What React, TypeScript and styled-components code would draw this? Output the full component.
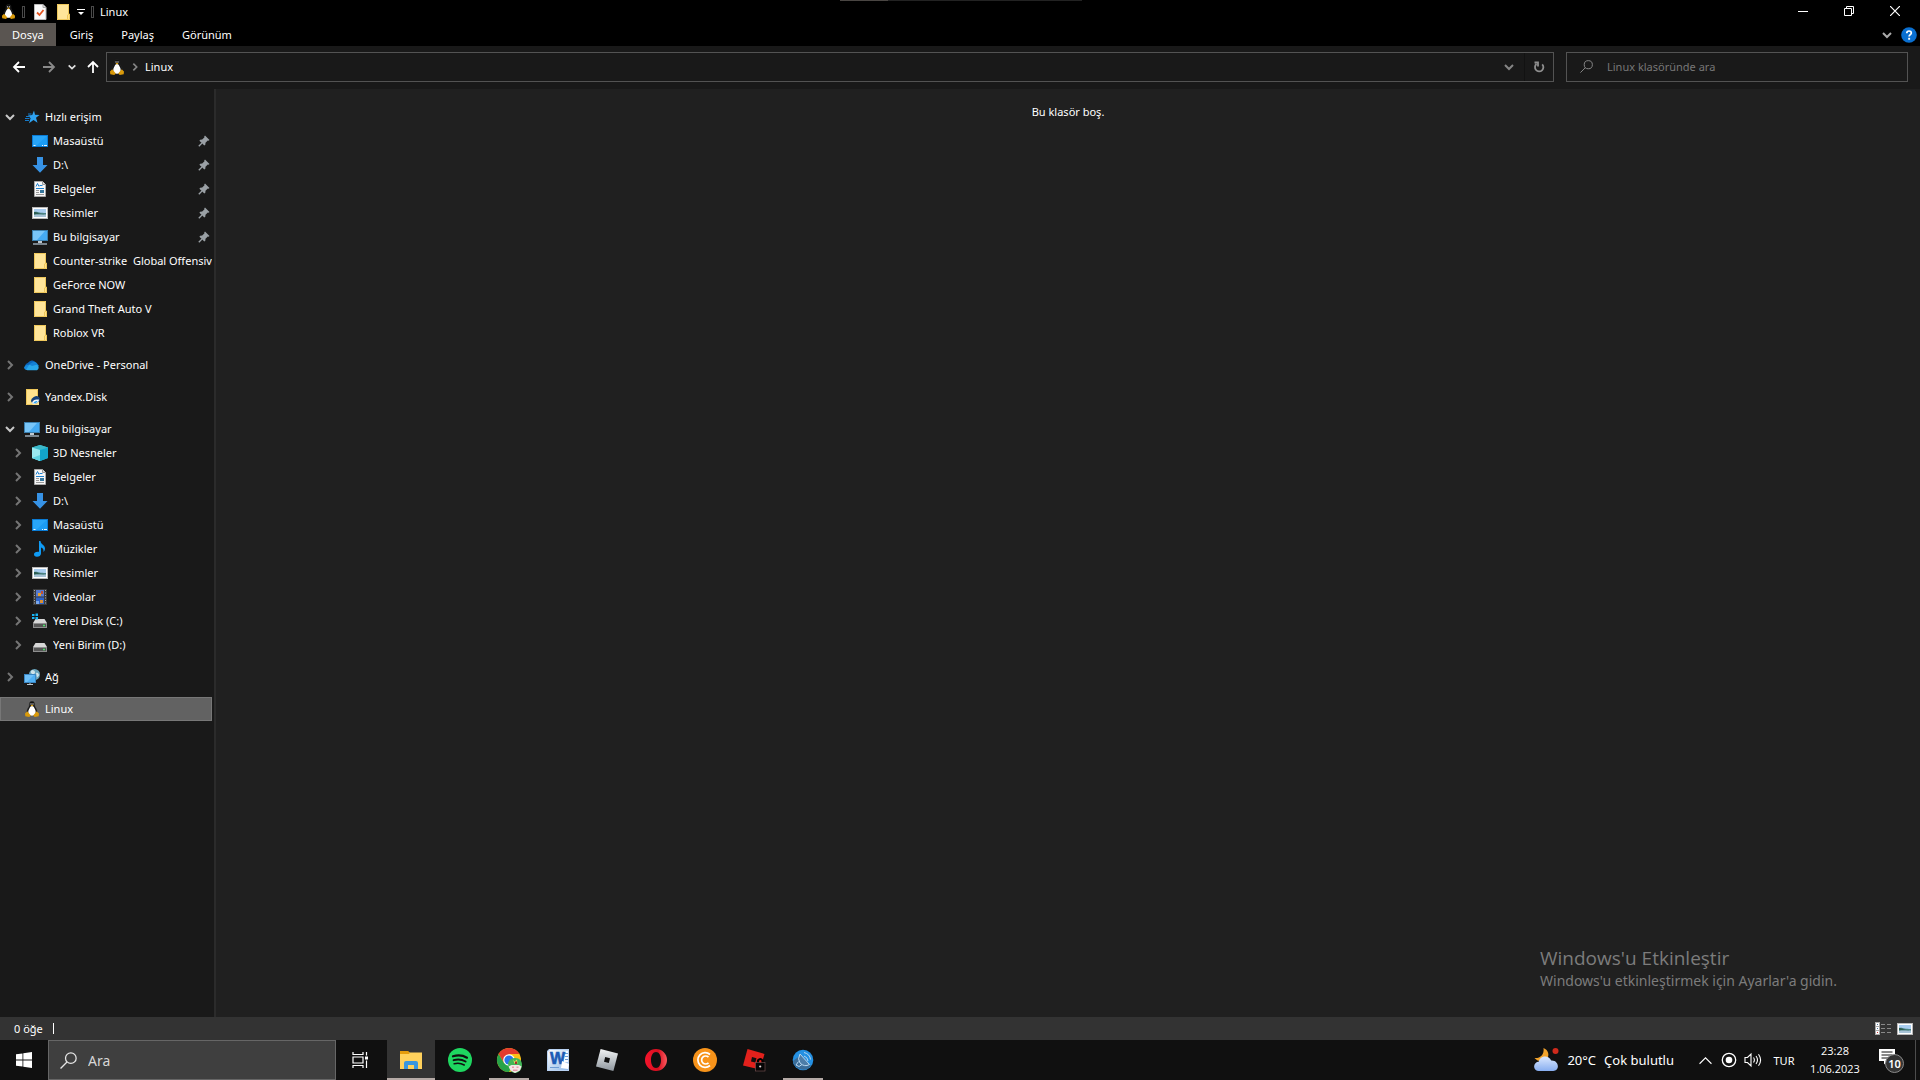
import React, { ReactNode } from "react";
import styled, { createGlobalStyle } from "styled-components";

const GlobalStyle = createGlobalStyle`
  * { box-sizing: border-box; }
  html, body { margin: 0; padding: 0; background: #191919; }
  body { font-family: "Noto Sans", "Open Sans", sans-serif; font-size: 11px; color: #fff; overflow: hidden; }
  button, input { font: inherit; color: inherit; border: 0; padding: 0; margin: 0; background: none; }
  button { cursor: pointer; }
  ul { list-style: none; margin: 0; padding: 0; }
  a { color: inherit; text-decoration: none; }
  svg { display: block; flex: none; }
`;

/* ---------- layout ---------- */

const Desktop = styled.div`
  display: flex;
  flex-direction: column;
  min-height: 100vh;
`;

const TitleBar = styled.header`
  display: flex;
  align-items: center;
  justify-content: space-between;
  height: 23px;
  background: #000;
`;

const QuickAccess = styled.div`
  display: flex;
  align-items: center;
  height: 100%;
  gap: 6px;
  padding-left: 1px;
`;

const IconButton = styled.button<{ $w: number }>`
  display: flex;
  align-items: center;
  justify-content: center;
  width: ${(p) => p.$w}px;
  height: 100%;
`;

const TitleText = styled.h1`
  margin: 0;
  font-size: 11px;
  font-weight: 400;
  line-height: 16px;
`;

const Divider = styled.span`
  width: 3px;
  height: 12px;
  border: 1px solid #4a4a4a;
`;

const WindowButtons = styled.div`
  display: flex;
  height: 100%;
  padding-right: 2px;
  padding-bottom: 2px;
`;

const TopStrip = styled.span`
  position: absolute;
  top: 0;
  left: 50%;
  width: 242px;
  height: 1px;
  margin-left: -120px;
  background: linear-gradient(to right, #4a4643 48px, #222 48px);
`;

const Ribbon = styled.nav`
  display: flex;
  justify-content: space-between;
  height: 23px;
  background: #000;
`;

const Tabs = styled.div`
  display: flex;
`;

const Tab = styled.button<{ $active?: boolean }>`
  padding: 0 ${(p) => (p.$active ? 12 : 14)}px;
  line-height: 16px;
  background: ${(p) => (p.$active ? "#5a5551" : "transparent")};
`;

const AddressRow = styled.div`
  display: flex;
  align-items: center;
  height: 43px;
  padding: 0 12px 1px 4px;
`;

const AddressBox = styled.div`
  display: flex;
  align-items: center;
  flex: 1;
  height: 30px;
  padding-left: 2px;
  border: 1px solid #535353;
`;

const Crumb = styled.a`
  flex: 1;
  line-height: 16px;
`;

const RefreshCell = styled.span`
  display: flex;
  height: 100%;
  border-left: 1px solid #121212;
`;

const SearchBox = styled.label`
  display: flex;
  align-items: center;
  width: 342px;
  height: 30px;
  margin-left: 12px;
  padding: 0 13px 1px;
  gap: 14px;
  border: 1px solid #535353;
`;

const SearchInput = styled.input`
  flex: 1;
  min-width: 0;
  outline: none;
  &::placeholder { color: #777; opacity: 1; }
`;

const Body = styled.div`
  display: flex;
  flex: 1;
`;

const NavPane = styled.nav`
  display: flex;
  flex-direction: column;
  gap: 8px;
  width: 216px;
  padding: 16px 2px 0 0;
  border-right: 2px solid #2b2b2b;
  overflow: hidden;
`;

const Row = styled.li<{ $child?: boolean; $selected?: boolean }>`
  display: flex;
  align-items: center;
  height: 24px;
  padding-left: ${(p) => (p.$child ? 10 : 2)}px;
  background: ${(p) => (p.$selected ? "#626262" : "transparent")};
  box-shadow: ${(p) => (p.$selected ? "inset 0 0 0 1px #777" : "none")};
`;

const Toggle = styled.button`
  display: flex;
  align-items: center;
  justify-content: center;
  flex: none;
  width: 16px;
  height: 24px;
  margin-right: 6px;
`;

const RowLink = styled.a`
  display: flex;
  align-items: center;
  flex: 1;
  min-width: 0;
  gap: 5px;
`;

const RowText = styled.span`
  flex: 1;
  overflow: hidden;
  white-space: pre;
  line-height: 20px;
`;

const PinSlot = styled.span`
  padding-right: 2px;
`;

const Content = styled.main`
  flex: 1;
  padding-top: 14px;
  background: #202020;
  text-align: center;
  line-height: 18px;
`;

const EmptyText = styled.p`
  margin: 0;
`;

const Watermark = styled.aside`
  position: absolute;
  right: 82px;
  bottom: 89px;
  width: 298px;
  color: #7c7c7c;
  white-space: nowrap;
`;

const WatermarkTitle = styled.p`
  margin: 0;
  font-family: "Open Sans", "Noto Sans", sans-serif;
  font-size: 19px;
  line-height: 26px;
`;

const WatermarkText = styled.p`
  margin: 0;
  font-size: 14px;
  line-height: 20px;
`;

const StatusBar = styled.footer`
  display: flex;
  align-items: center;
  height: 23px;
  padding: 0 4px 0 14px;
  gap: 10px;
  background: #333;
`;

const Caret = styled.span`
  flex: 1;
  height: 11px;
  border-left: 1px solid #fff;
`;

const Views = styled.div`
  display: flex;
  height: 100%;
`;

const TaskBar = styled.footer`
  display: flex;
  justify-content: space-between;
  height: 40px;
  background: #101010;
`;

const TaskGroup = styled.div`
  display: flex;
  align-items: center;
`;

const TaskSearch = styled.label`
  display: flex;
  align-items: center;
  gap: 11px;
  width: 288px;
  height: 40px;
  padding-left: 11px;
  background: #3f3f3f;
  border: 1px solid #666;
  font-size: 14px;
`;

const TaskInput = styled.input`
  flex: 1;
  min-width: 0;
  outline: none;
  &::placeholder { color: #d6d6d6; opacity: 1; }
`;

const Apps = styled.div`
  display: flex;
  gap: 1px;
  padding-left: 3px;
`;

const TaskButton = styled.button<{ $active?: boolean; $running?: boolean }>`
  display: flex;
  align-items: center;
  justify-content: center;
  width: 48px;
  height: 40px;
  background-color: ${(p) => (p.$active ? "#333" : "transparent")};
  background-image: ${(p) => (p.$active || p.$running ? "linear-gradient(#b5aaa6, #b5aaa6)" : "none")};
  background-repeat: no-repeat;
  background-position: bottom;
  background-size: ${(p) => (p.$active ? 48 : 40)}px 2px;
`;

const Weather = styled.button`
  display: flex;
  align-items: center;
  gap: 8px;
  height: 40px;
  margin-right: 19px;
  font-size: 13px;
`;

const Lang = styled.button`
  width: 38px;
  height: 40px;
`;

const Clock = styled.button`
  width: 64px;
  height: 40px;
  font-family: "Open Sans", "Noto Sans", sans-serif;
  line-height: 18px;
`;

const ShowDesktop = styled.button`
  width: 5px;
  height: 40px;
  border-left: 1px solid #4c4c4c;
`;

/* ---------- icons ---------- */

type IconProps = { size?: number };

const Tux = ({ size = 16 }: IconProps) => (
  <svg width={size} height={size} viewBox="0 0 16 16">
    <path d="M8 0.300c-1.800 0-2.600 1.200-2.600 3 0 1.500-.3 2.200-1.200 3.600C3.300 8.300 2.800 9.800 2.900 12l2.200 2.500h5.800L13.100 12c.1-2.200-.4-3.700-1.300-5.100-.9-1.400-1.200-2.100-1.200-3.600 0-1.800-.8-3-2.600-3z" fill="#111" stroke="#333" strokeWidth=".4" />
    <path d="M8 5c-1.500 0-2 1-2.600 2.500-.8 1.400-1.300 2.700-1.100 4.700.2 1.700 1.900 2.500 3.700 2.500s3.500-.8 3.700-2.500c.2-2-.3-3.300-1.100-4.700C10 6 9.500 5 8 5z" fill="#fff" />
    <circle cx="7" cy="3" r=".7" fill="#ddd" /><circle cx="9" cy="3" r=".7" fill="#ddd" />
    <path d="M6.500 4.300L8 3.700l1.500.6L8 5.500z" fill="#e2a60f" />
    <path d="M3.300 10.300L1 12.500l.3 2.700 4 .7 1.500-1.500zM12.700 10.300l2.300 2.200-.3 2.700-4 .7-1.500-1.500z" fill="#d99a0b" />
  </svg>
);

const Folder = () => (
  <svg width="16" height="16" viewBox="0 0 16 16">
    <path d="M2 0h12v10.500h1V16H2z" fill="#ffe08a" />
    <path d="M2 0h12v10.500l-1.500 1V16H2z" fill="#ffe599" />
    <path d="M2.500.5h11v10M2.500.5v15h10v-4.500l2-1v5.500h-2" fill="none" stroke="#eec75a" strokeWidth="1" />
  </svg>
);

const CheckedDoc = () => (
  <svg width="14" height="16" viewBox="0 0 14 16">
    <path d="M1.500.5h8.500l3 3v12H1.500z" fill="#fafafa" stroke="#bbb" />
    <path d="M10 .5v3h3" fill="#ddd" stroke="#aaa" />
    <path d="M4 8.500l2.500 2.500 4-5" fill="none" stroke="#e35420" strokeWidth="1.800" />
  </svg>
);

const Star = () => (
  <svg width="16" height="16" viewBox="0 0 16 16">
    <path d="M10 1.500l1 4.300 4.500.2-3.500 2.700 1.500 5-4-2.700-4.500 3.300 1.600-5-2.600-2.800 4.200-.4z" fill="#2ea3f2" />
    <path d="M2 7.500h4M1 9.500h4.500M1 11.500h4M4 5h3.500" stroke="#1479c9" />
  </svg>
);

const DesktopIcon = () => (
  <svg width="16" height="16" viewBox="0 0 16 16">
    <rect x=".5" y="2.500" width="15" height="11" fill="#1b9cf4" stroke="#0a7bd4" />
    <path d="M1 3h14L4 13H1z" fill="#36aefb" opacity=".5" />
    <path d="M1.500 12.500h2M10 12.500h1M12 12.500h3" stroke="#e8f6ff" />
  </svg>
);

const Download = () => (
  <svg width="16" height="16" viewBox="0 0 16 16">
    <path d="M5 0h6v8h4.500L8 15.800.500 8H5z" fill="#3793e6" />
  </svg>
);

const Document = () => (
  <svg width="16" height="16" viewBox="0 0 16 16">
    <path d="M2.500.5h8l3 3v12h-11z" fill="#f7f7f7" stroke="#a9a9a9" />
    <path d="M10.500.5v3h3" fill="#ddd" stroke="#999" />
    <path d="M4 5.500l1.500-3L7 5.500M7.500 4.500h3M4 7.500h8" fill="none" stroke="#1d80cf" />
    <path d="M4 9.500h3M4 11.500h3M4 13.500h8" stroke="#999" />
    <rect x="8" y="9" width="4" height="3" fill="#35769c" />
  </svg>
);

const Picture = () => (
  <svg width="16" height="16" viewBox="0 0 16 16">
    <rect x=".5" y="2.500" width="15" height="11" fill="#fff" stroke="#b9b9b9" />
    <rect x="2" y="4" width="12" height="8" fill="#a9cdf0" />
    <path d="M2 7c3-1 5 1 12 1v4H2z" fill="#4c8383" />
    <path d="M2 10c4-1 8 0 12-.500V12H2z" fill="#a7c3d6" />
    <path d="M2 7c3 0 4 1.500 8 2H2z" fill="#2d5d50" />
  </svg>
);

const Computer = () => (
  <svg width="16" height="16" viewBox="0 0 16 16">
    <rect x=".5" y="1.500" width="15" height="10" fill="#45aaf2" stroke="#3b7fae" />
    <path d="M1 2h12L5 11H1z" fill="#8ed0fb" opacity=".7" />
    <path d="M6 13h4" stroke="#bfc9d1" strokeWidth="2" />
    <path d="M1 15h14" stroke="#9aa9b5" strokeWidth="1.500" />
  </svg>
);

const OneDrive = () => (
  <svg width="16" height="16" viewBox="0 0 16 16">
    <path d="M1 9a4 4 0 0 1 3-3.300A4.700 4.700 0 0 1 12 6L13 8 3 13z" fill="#0c64b8" />
    <path d="M8 5.500a4 4 0 0 1 5.500 1.500L15 9l-7 3-4-4z" fill="#1481d6" />
    <path d="M1 11.500C2 8 6 7 8 9l4.500-1.300a3 3 0 0 1 .5 5.600H3.500A2.600 2.600 0 0 1 1 11.500z" fill="#29a7ea" />
    <path d="M0 10.500a3.500 3.500 0 0 1 3-2.500h2L2 12.800A3 3 0 0 1 0 10.500z" fill="#1689dc" />
  </svg>
);

const YandexDisk = () => (
  <svg width="16" height="16" viewBox="0 0 16 16">
    <path d="M2 0h12v8h1v8H2z" fill="#ffe28e" />
    <path d="M2.500.5h11v8M2.500 0v15.500h6" fill="none" stroke="#eec75a" />
    <ellipse cx="11.500" cy="11" rx="4.500" ry="3.500" fill="#143f78" transform="rotate(-30 11.500 11)" />
    <path d="M8 14.500c0-3 3-4.500 7-4 0 3-3 5.500-7 4z" fill="#eef7ff" />
    <path d="M9.500 14c1-2 3-2 4-2-1 2-2 2.500-4 2z" fill="#2aa4ef" />
  </svg>
);

const Cube = () => (
  <svg width="16" height="16" viewBox="0 0 16 16">
    <path d="M8 0l8 2.500v10.500L8 16 0 13V2.500z" fill="#37c4d8" />
    <path d="M0 2.500L8 0l8 2.500L8 5z" fill="#3cb8c9" />
    <path d="M0 2.500L8 5v11L0 13z" fill="#9ae9f0" />
    <path d="M8 5l8-2.500V13l-8 3z" fill="#12a5cc" />
    <path d="M0 13l8-3v6z" fill="#5fd3e2" />
  </svg>
);

const Music = () => (
  <svg width="16" height="16" viewBox="0 0 16 16">
    <path d="M7 0h1.500c.3 3.500 4.500 4 4.500 7.500 0 1.500-.6 2.600-1.500 3.500.4-3-1-4-2.500-4.500V12.500c0 2-1.800 3.300-4 3.300S2 14.700 2 13.300c0-1.700 2-3 5-2.500z" fill="#0f9bf5" />
  </svg>
);

const Video = () => (
  <svg width="16" height="16" viewBox="0 0 16 16">
    <rect x="1" y="0" width="14" height="16" fill="#3a3a3a" />
    <path d="M2.500 1v14M13.500 1v14" stroke="#a8a8a8" strokeDasharray="1 1.500" />
    <rect x="4" y="1" width="8" height="6.500" fill="#5679cf" />
    <rect x="4" y="8.500" width="8" height="6.500" fill="#2f64c8" />
    <path d="M6 4h3v3H6z" fill="#e3a12f" /><path d="M9 2h2v3H9z" fill="#c14f35" />
    <path d="M8 11h3v3H8z" fill="#d98f34" /><path d="M4 12h3v3H4z" fill="#79a7ec" />
  </svg>
);

const Disk = ({ system }: { system?: boolean }) => (
  <svg width="16" height="16" viewBox="0 0 16 16">
    <path d="M3.500 6h9L15 10H1z" fill="#d7d7d7" />
    <rect x="1" y="10" width="14" height="5" fill="#8e8e8e" />
    <rect x="2" y="11" width="12" height="3" fill="#555" />
    <path d="M11 12.500h2" stroke="#4be36a" strokeWidth="1.500" />
    {system && <path d="M0 1h2.500v2H0zM3.500 .500H6V3H3.500zM0 4h2.500v2H0zM3.500 4H6v2.500H3.500z" fill="#19b5f5" />}
  </svg>
);

const Network = () => (
  <svg width="16" height="16" viewBox="0 0 16 16">
    <circle cx="10.500" cy="5.500" r="5.500" fill="#6aa5bd" />
    <path d="M8 1c2 0 3 1 3 2.500S9 6 8 5 6 3 8 1zM12 4c2-1 3 1 3 2.500l-2 2z" fill="#cfe4ea" />
    <rect x=".5" y="5.500" width="11" height="8" fill="#4fb0f4" stroke="#3b87c4" />
    <path d="M1 6h9l-7 7H1z" fill="#90d0fb" opacity=".5" />
    <path d="M6 14v1M3 15.500h6" stroke="#b8c4cd" />
  </svg>
);

const Pin = () => (
  <svg width="12" height="12" viewBox="0 0 12 12">
    <path d="M7 .5L11.500 5l-1 .8-.7-.3L7.500 7.800l-.2 2-1 .8L1.400 5.700l.8-1 2-.2 2.300-2.300-.3-.7z" fill="#9aa0a5" />
    <path d="M4 8L.8 11.200" stroke="#9aa0a5" strokeWidth="1.300" />
  </svg>
);

const Chevron = ({ dir, color = "#9b9b9b", size = 12, weight = 2 }: { dir: "down" | "right" | "up"; color?: string; size?: number; weight?: number }) => (
  <svg width={size} height={size} viewBox="0 0 12 12" fill="none" stroke={color} strokeWidth={weight}>
    <path d={dir === "down" ? "M2 4l4 4 4-4" : dir === "right" ? "M4 2l4 4-4 4" : "M0.500 9L6 3.500 11.500 9"} />
  </svg>
);

const Arrow = ({ dir, color = "#fff" }: { dir: "left" | "right" | "up"; color?: string }) => (
  <svg width="14" height="14" viewBox="0 0 14 14" fill="none" stroke={color} strokeWidth="1.800">
    <path d={{ left: "M13 7H2M7 2L2 7l5 5", right: "M1 7h11M7 2l5 5-5 5", up: "M7 13V2M2 7l5-5 5 5" }[dir]} />
  </svg>
);

const Magnifier = ({ size = 13, color = "#888" }: { size?: number; color?: string }) => (
  <svg width={size} height={size} viewBox="0 0 16 16" fill="none" stroke={color} strokeWidth="1.200">
    <circle cx="10.200" cy="5.800" r="5" /><path d="M6.600 9.400L.5 15.500" />
  </svg>
);

const Refresh = () => (
  <svg width="12" height="12" viewBox="0 0 12 12" fill="none" stroke="#8f8f8f" strokeWidth="1.800">
    <path d="M9.200 3.300A4.200 4.200 0 1 1 3.500 3M1.500 1.500h3.500v4" />
  </svg>
);

const Help = () => (
  <svg width="16" height="16" viewBox="0 0 16 16">
    <circle cx="8" cy="8" r="7.800" fill="#0a6fd0" />
    <path d="M5.800 6.200c0-3 4.600-2.800 4.500-.2 0 1.600-2.200 1.700-2.200 3.500" fill="none" stroke="#fff" strokeWidth="1.700" />
    <rect x="7.200" y="10.800" width="1.900" height="1.900" fill="#fff" />
  </svg>
);

const WindowsLogo = () => (
  <svg width="16" height="16" viewBox="0 0 16 16" fill="#fff">
    <path d="M0 2.300l6.500-.9v6.200H0zM7.300 1.300L16 0v7.600H7.300zM0 8.400h6.500v6.200L0 13.700zM7.300 8.400H16V16l-8.700-1.300z" />
  </svg>
);

const TaskView = () => (
  <svg width="17" height="16" viewBox="0 0 17 16" fill="none" stroke="#fff" strokeWidth="1.200">
    <path d="M1 0v2.500h10V0M1 16v-2.500h10V16M1 5h10v6H1zM14.500 0v3.500M14.500 8.500V16" />
    <path d="M13 4.500h3v3h-3z" fill="#fff" stroke="none" />
  </svg>
);

const Explorer = () => (
  <svg width="22" height="19" viewBox="0 0 22 19">
    <path d="M0 1h8l2 .5h12V18H0z" fill="#ffd15c" />
    <path d="M0 0h8.500l1 3H0z" fill="#e59c0c" />
    <path d="M4 18v-6q0-2 2-2h10q2 0 2 2v6h-4v-4H8v4z" fill="#3a96dd" />
  </svg>
);

const Spotify = () => (
  <svg width="24" height="24" viewBox="0 0 24 24">
    <circle cx="12" cy="12" r="12" fill="#1ed760" />
    <g fill="none" stroke="#101010" strokeLinecap="round">
      <path d="M5 8.300c4.500-1.400 10-1 14 1.400" strokeWidth="2.200" />
      <path d="M5.600 12.200c4-1.200 8.500-.7 12 1.300" strokeWidth="1.900" />
      <path d="M6.200 15.800c3.400-.9 7-.5 10 1.200" strokeWidth="1.600" />
    </g>
  </svg>
);

const Chrome = () => (
  <svg width="26" height="26" viewBox="-1 -1 26 26">
    <circle cx="12" cy="12" r="12" fill="#fbc116" />
    <path d="M1.600 6A12 12 0 0 1 22.400 6H12L7 15z" fill="#e33b2e" />
    <path d="M1.600 6A12 12 0 0 0 12 24l5-9-10 0z" fill="#27a349" />
    <circle cx="12" cy="12" r="5.800" fill="#fff" /><circle cx="12" cy="12" r="4.600" fill="#2a75e8" />
    <path d="M11 15.500c1-4 4-5.500 7.500-5.500 4 0 6.500 3 6.500 7s-3 8-7 8-6-4-7-9.500z" fill="#41b658" />
    <path d="M11.500 18.500l3-1.500h7.500l2.500 1.500-1.500 4-5 2.500-4.500-2.500z" fill="#f3e6e6" />
    <path d="M16 11.500l1.500 2 2.500-2 .5 4h-3z" fill="#e6de5a" />
    <path d="M18 13.500h2v2.500h-2z" fill="#a92c2c" />
    <path d="M15 18.500h2v1.500h-2zM19.500 18.500h2v1.500h-2zM16 21.500h4.500v1.500H16z" fill="#e79aa8" />
  </svg>
);

const Word = () => (
  <svg width="22" height="22" viewBox="0 0 22 22">
    <defs><linearGradient id="word" x1="0" y1="0" x2="1" y2="1"><stop offset="0" stopColor="#fff" /><stop offset="1" stopColor="#8fb7e6" /></linearGradient></defs>
    <path d="M2 0h20v22H0V2z" fill="#b9d2f2" /><path d="M3 1h18v20H1V3z" fill="url(#word)" />
    <path d="M17 2h4v11h-4z" fill="#f8fbff" />
    <path d="M18 4.500h3M18 7.500h3M18 10.500h3M3 18.500h9" stroke="#6d9bd3" />
    <text x="10.500" y="15" textAnchor="middle" fontFamily="Liberation Sans, sans-serif" fontSize="16" fontWeight="700" fill="#1c5bb5" stroke="#1c5bb5" strokeWidth=".6">W</text>
    <path d="M15 12l7 3-1 5-7-1z" fill="#fff" />
  </svg>
);

const Roblox = () => (
  <svg width="22" height="22" viewBox="0 0 22 22">
    <defs><linearGradient id="rbx" x1="0" y1="0" x2="0" y2="1"><stop offset="0" stopColor="#f2f4f5" /><stop offset="1" stopColor="#8e969e" /></linearGradient></defs>
    <path d="M4.600 0L22 4.600 17.400 22 0 17.400z" fill="url(#rbx)" />
    <path d="M9.200 8L14 9.200 12.800 14 8 12.800z" fill="#101010" />
  </svg>
);

const Opera = () => (
  <svg width="22" height="22" viewBox="0 0 22 22">
    <defs><linearGradient id="opera" x1="0" y1="0" x2="1" y2="0"><stop offset="0" stopColor="#f5142b" /><stop offset=".6" stopColor="#d80f20" /><stop offset="1" stopColor="#fb5a5f" /></linearGradient></defs>
    <path fillRule="evenodd" d="M11 0a11 11 0 1 0 0 22 11 11 0 0 0 0-22zm0 3c3 0 5 3.500 5 8s-2 8-5 8-5-3.500-5-8 2-8 5-8z" fill="url(#opera)" />
  </svg>
);

const CoinApp = () => (
  <svg width="24" height="24" viewBox="0 0 24 24" fill="none" stroke="#fff" strokeWidth="1.700">
    <circle cx="12" cy="12" r="12" fill="#f7931a" stroke="none" />
    <path d="M17 6.500A7.300 7.300 0 1 0 17 17.500M15.500 9.200a4 4 0 1 0 0 5.600" />
  </svg>
);

const RobloxRed = () => (
  <svg width="23" height="23" viewBox="0 0 23 23">
    <path d="M4.500 0L21.500 5 17 20.500 0 16.500z" fill="#e2211c" />
    <path d="M9 8l4.500 1.200-1.200 4.300L8 12.500z" fill="#101010" />
    <path d="M15 14v-2.500q2.500-3 4.500 0v2.500" fill="none" stroke="#000" strokeWidth="2.200" />
    <rect x="12.500" y="13.500" width="9.500" height="8.500" fill="#050505" stroke="#7c5555" strokeWidth=".6" />
    <circle cx="17.200" cy="17.500" r="1.100" fill="#e8d8d8" />
  </svg>
);

const BlueApp = () => (
  <svg width="22" height="22" viewBox="0 0 22 22" fill="none" stroke="#b7d7f0">
    <circle cx="11" cy="11" r="10.300" fill="#2490e2" stroke="none" />
    <path d="M1 12A10.300 10.300 0 0 0 19 17L9 6z" fill="#3b6d99" stroke="none" />
    <path d="M8 5l9.500 10.500q-5 3-9.500-1.500Q5 10 8 5z" fill="#4d7da8" />
    <path d="M6.500 12.500L4 16l3 1.500 3-2M12 7q3.500 1 4 5M12 3.500q6 1.500 6.500 7" />
  </svg>
);

const WeatherIcon = () => (
  <svg width="25" height="24" viewBox="0 0 25 24">
    <defs><linearGradient id="cloud" x1="0" y1="0" x2="0" y2="1"><stop offset="0" stopColor="#dbe8ff" /><stop offset="1" stopColor="#88aef0" /></linearGradient></defs>
    <path d="M9.500 0c5 2 6.500 7.500 3 11.500C8.500 15 3 13 .5 10 6 10.500 10.500 7 9.500 0z" fill="#f2a32c" />
    <path d="M4.700 23a4.600 4.600 0 0 1 0-9.200C6 7.500 14.500 6.500 17.200 12.500c8-.5 9 10.500 2 10.500z" fill="url(#cloud)" />
    <circle cx="21.500" cy="3" r="3" fill="#cf2a1c" />
  </svg>
);

const Record = () => (
  <svg width="16" height="16" viewBox="0 0 16 16">
    <circle cx="8" cy="8" r="6.700" fill="none" stroke="#fff" strokeWidth="1.300" /><circle cx="8" cy="8" r="3.300" fill="#fff" />
  </svg>
);

const Speaker = () => (
  <svg width="18" height="16" viewBox="0 0 18 16" fill="none" stroke="#fff" strokeWidth="1.100">
    <path d="M1 5.500h2.500L7 2v12l-3.500-3.500H1zM9.500 5.500q1.800 2.500 0 5M12 4q3 4 0 8M14.500 2.200q4.200 5.800 0 11.600" />
  </svg>
);

const Notifications = () => (
  <svg width="27" height="26" viewBox="0 0 27 26">
    <path d="M1 2h16v12H9.500L6 17.500V14H1z" fill="#fff" />
    <path d="M3.500 5h11M3.500 8h11M3.500 11h8" stroke="#101010" />
    <circle cx="16.500" cy="16.500" r="9" fill="#343434" stroke="#8a8a8a" />
    <text x="16.500" y="20.500" textAnchor="middle" fontSize="11" fontWeight="600" fill="#fff">10</text>
  </svg>
);

const DetailsView = () => (
  <svg width="17" height="13" viewBox="0 0 17 13">
    <path d="M0 0h5v13H0z" fill="#aaa" />
    <path d="M1 1h3v3H1zM1 5h3v3H1zM1 9h3v3H1z" fill="#fff" />
    <path d="M2 2h1v1H2zM2 6h1v1H2z" fill="#4974a0" /><path d="M2 10h1v1H2z" fill="#c33" />
    <path d="M6 2.500h4M12 2.500h4M6 6.500h4M12 6.500h4M6 10.500h4M12 10.500h4" stroke="#888" />
  </svg>
);

const Minimize = () => <svg width="10" height="10" viewBox="0 0 10 10"><path d="M0 5.500h10" stroke="#fff" /></svg>;
const Restore = () => <svg width="10" height="10" viewBox="0 0 10 10" fill="none" stroke="#fff"><path d="M.5 2.500h7v7h-7zM2.500 2.500v-2h7v7h-2" /></svg>;
const Close = () => <svg width="10" height="10" viewBox="0 0 10 10"><path d="M0 0l10 10M10 0L0 10" stroke="#fff" strokeWidth="1.200" /></svg>;
const Customize = () => <svg width="8" height="8" viewBox="0 0 8 8"><path d="M0 1.500h8" stroke="#fff" /><path d="M1 4h6L4 7z" fill="#fff" /></svg>;

/* ---------- tree ---------- */

type Item = { label: string; icon: ReactNode; pinned?: boolean; toggle?: boolean };
type Group = Item & { open?: boolean; selected?: boolean; children?: Item[] };

const groups: Group[] = [
  {
    label: "Hızlı erişim", icon: <Star />, toggle: true, open: true,
    children: [
      { label: "Masaüstü", icon: <DesktopIcon />, pinned: true },
      { label: "D:\\", icon: <Download />, pinned: true },
      { label: "Belgeler", icon: <Document />, pinned: true },
      { label: "Resimler", icon: <Picture />, pinned: true },
      { label: "Bu bilgisayar", icon: <Computer />, pinned: true },
      { label: "Counter-strike  Global Offensive", icon: <Folder /> },
      { label: "GeForce NOW", icon: <Folder /> },
      { label: "Grand Theft Auto V", icon: <Folder /> },
      { label: "Roblox VR", icon: <Folder /> },
    ],
  },
  { label: "OneDrive - Personal", icon: <OneDrive />, toggle: true },
  { label: "Yandex.Disk", icon: <YandexDisk />, toggle: true },
  {
    label: "Bu bilgisayar", icon: <Computer />, toggle: true, open: true,
    children: [
      { label: "3D Nesneler", icon: <Cube />, toggle: true },
      { label: "Belgeler", icon: <Document />, toggle: true },
      { label: "D:\\", icon: <Download />, toggle: true },
      { label: "Masaüstü", icon: <DesktopIcon />, toggle: true },
      { label: "Müzikler", icon: <Music />, toggle: true },
      { label: "Resimler", icon: <Picture />, toggle: true },
      { label: "Videolar", icon: <Video />, toggle: true },
      { label: "Yerel Disk (C:)", icon: <Disk system />, toggle: true },
      { label: "Yeni Birim (D:)", icon: <Disk />, toggle: true },
    ],
  },
  { label: "Ağ", icon: <Network />, toggle: true },
  { label: "Linux", icon: <Tux />, selected: true },
];

const TreeRow = ({ item, child, open, selected }: { item: Item; child?: boolean; open?: boolean; selected?: boolean }) => (
  <Row $child={child} $selected={selected}>
    <Toggle aria-label={item.label} disabled={!item.toggle}>
      {item.toggle && <Chevron dir={open ? "down" : "right"} color={open ? "#c8c8c8" : "#757575"} />}
    </Toggle>
    <RowLink href="#">
      {item.icon}
      <RowText>{item.label}</RowText>
      {item.pinned && <PinSlot><Pin /></PinSlot>}
    </RowLink>
  </Row>
);

const apps = [
  { name: "Dosya Gezgini", icon: <Explorer />, active: true },
  { name: "Spotify", icon: <Spotify /> },
  { name: "Chrome", icon: <Chrome />, running: true },
  { name: "Word", icon: <Word /> },
  { name: "Roblox", icon: <Roblox /> },
  { name: "Opera", icon: <Opera /> },
  { name: "CryptoTab", icon: <CoinApp /> },
  { name: "Roblox Unlocker", icon: <RobloxRed /> },
  { name: "Studio", icon: <BlueApp />, running: true },
];

export default function App() {
  return (
    <Desktop>
      <GlobalStyle />
      <TopStrip />
      <TitleBar>
        <QuickAccess>
          <Tux size={15} />
          <Divider />
          <IconButton $w={18} aria-label="Özellikler"><CheckedDoc /></IconButton>
          <IconButton $w={16} aria-label="Yeni klasör"><Folder /></IconButton>
          <IconButton $w={8} aria-label="Özelleştir"><Customize /></IconButton>
          <Divider />
          <TitleText>Linux</TitleText>
        </QuickAccess>
        <WindowButtons>
          <IconButton $w={46} aria-label="Simge durumuna küçült"><Minimize /></IconButton>
          <IconButton $w={46} aria-label="Önceki boyut"><Restore /></IconButton>
          <IconButton $w={46} aria-label="Kapat"><Close /></IconButton>
        </WindowButtons>
      </TitleBar>
      <Ribbon>
        <Tabs>
          <Tab $active>Dosya</Tab>
          <Tab>Giriş</Tab>
          <Tab>Paylaş</Tab>
          <Tab>Görünüm</Tab>
        </Tabs>
        <Tabs>
          <IconButton $w={22} aria-label="Şeridi genişlet"><Chevron dir="down" color="#aaa" /></IconButton>
          <IconButton $w={22} aria-label="Yardım"><Help /></IconButton>
        </Tabs>
      </Ribbon>
      <AddressRow>
        <IconButton $w={30} aria-label="Geri"><Arrow dir="left" /></IconButton>
        <IconButton $w={30} aria-label="İleri"><Arrow dir="right" color="#8a8a8a" /></IconButton>
        <IconButton $w={16} aria-label="Son konumlar"><Chevron dir="down" color="#e0e0e0" size={10} /></IconButton>
        <IconButton $w={26} aria-label="Yukarı"><Arrow dir="up" /></IconButton>
        <AddressBox>
          <Tux size={16} />
          <IconButton $w={20} aria-label="Klasör yolu"><Chevron dir="right" size={10} color="#858585" /></IconButton>
          <Crumb href="#">Linux</Crumb>
          <IconButton $w={30} aria-label="Önceki konumlar"><Chevron dir="down" color="#858585" /></IconButton>
          <RefreshCell><IconButton $w={28} aria-label="Yenile"><Refresh /></IconButton></RefreshCell>
        </AddressBox>
        <SearchBox>
          <Magnifier />
          <SearchInput type="text" aria-label="Klasörde ara" placeholder="Linux klasöründe ara" />
        </SearchBox>
      </AddressRow>
      <Body>
        <NavPane>
          {groups.map((g) => (
            <ul key={g.label}>
              <TreeRow item={g} open={g.open} selected={g.selected} />
              {g.children?.map((c) => <TreeRow key={c.label} item={c} child />)}
            </ul>
          ))}
        </NavPane>
        <Content><EmptyText>Bu klasör boş.</EmptyText></Content>
      </Body>
      <Watermark>
        <WatermarkTitle>Windows'u Etkinleştir</WatermarkTitle>
        <WatermarkText>Windows'u etkinleştirmek için Ayarlar'a gidin.</WatermarkText>
      </Watermark>
      <StatusBar>
        <span>0 öğe</span>
        <Caret />
        <Views>
          <IconButton $w={22} aria-label="Ayrıntılar"><DetailsView /></IconButton>
          <IconButton $w={22} aria-label="Büyük simgeler"><Picture /></IconButton>
        </Views>
      </StatusBar>
      <TaskBar>
        <TaskGroup>
          <IconButton $w={48} aria-label="Başlat"><WindowsLogo /></IconButton>
          <TaskSearch>
            <Magnifier size={17} color="#e6e6e6" />
            <TaskInput type="text" aria-label="Ara" placeholder="Ara" />
          </TaskSearch>
          <IconButton $w={48} aria-label="Görev görünümü"><TaskView /></IconButton>
          <Apps>
            {apps.map((a) => (
              <TaskButton key={a.name} aria-label={a.name} $active={a.active} $running={a.running}>{a.icon}</TaskButton>
            ))}
          </Apps>
        </TaskGroup>
        <TaskGroup>
          <Weather><WeatherIcon /><span>20°C</span><span>Çok bulutlu</span></Weather>
          <IconButton $w={24} aria-label="Gizli simgeler"><Chevron dir="up" color="#fff" weight={1} size={13} /></IconButton>
          <IconButton $w={24} aria-label="Kayıt"><Record /></IconButton>
          <IconButton $w={24} aria-label="Ses"><Speaker /></IconButton>
          <Lang>TUR</Lang>
          <Clock>23:28<br />1.06.2023</Clock>
          <IconButton $w={48} aria-label="Bildirimler"><Notifications /></IconButton>
          <ShowDesktop aria-label="Masaüstünü göster" />
        </TaskGroup>
      </TaskBar>
    </Desktop>
  );
}
